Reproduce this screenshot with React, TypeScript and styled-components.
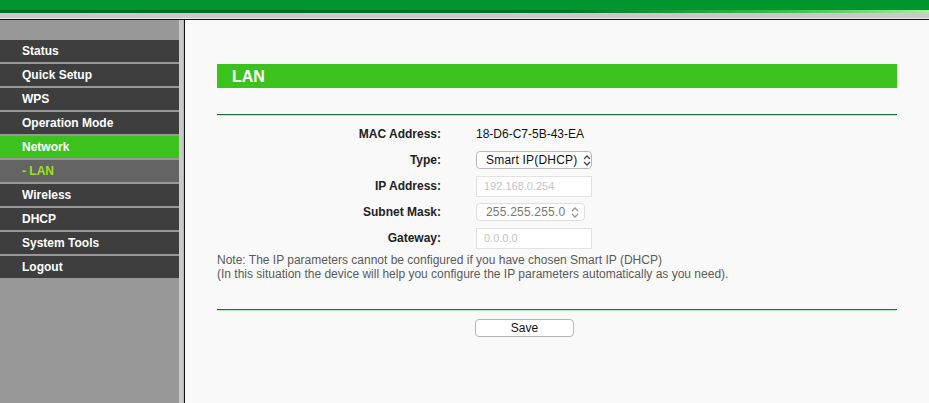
import styled, { createGlobalStyle } from "styled-components";

const GlobalStyle = createGlobalStyle`
  html, body {
    margin: 0;
    padding: 0;
    width: 929px;
    height: 403px;
    overflow: hidden;
    background: #f9f9f9;
    font-family: "Liberation Sans", Arial, Helvetica, sans-serif;
  }
`;

const Page = styled.div`
  display: flex;
  flex-direction: column;
  width: 929px;
  height: 403px;
`;

const TopBar = styled.div`
  display: flex;
  flex-direction: column;
  flex-shrink: 0;
`;

const Stripe = styled.div<{ $h: number; $bg: string }>`
  height: ${({ $h }) => $h}px;
  background: ${({ $bg }) => $bg};
`;

const Body = styled.div`
  display: flex;
  flex: 1;
  min-height: 0;
`;

const Sidebar = styled.nav`
  width: 179px;
  flex-shrink: 0;
  display: flex;
  flex-direction: column;
  gap: 2px;
  padding-top: 20px;
  background: #989898;
`;

const MenuItem = styled.div<{ $state?: "active" | "sub" }>`
  height: 22px;
  line-height: 22px;
  padding-left: 22px;
  font-size: 12px;
  font-weight: bold;
  color: ${({ $state }) => ($state === "sub" ? "#9ee01a" : "#fff")};
  background: ${({ $state }) =>
    $state === "active" ? "#3cc21c" : $state === "sub" ? "#646464" : "#3e3e3e"};
`;

const Divider = styled.div`
  width: 5px;
  flex-shrink: 0;
  background: #c9c9c9;
  border-right: 1px solid #111;
  box-shadow: inset -1px 0 0 #b5b5b5;
`;

const Content = styled.main`
  flex: 1;
  padding: 44px 32px 0 32px;
  background: #f9f9f9;
`;

const Section = styled.div`
  width: 680px;
`;

const TitleBar = styled.div`
  height: 24px;
  line-height: 25px;
  padding-left: 15px;
  background: #3cc21c;
  color: #fff;
  font-size: 16px;
  font-weight: bold;
`;

const Rule = styled.div<{ $mt: number }>`
  margin-top: ${({ $mt }) => $mt}px;
  height: 1px;
  background: #236b3c;
  border-bottom: 1px solid #b6e8c4;
`;

const Form = styled.div`
  display: grid;
  grid-template-columns: 224px auto;
  grid-auto-rows: 26px;
  column-gap: 34px;
  align-items: center;
  margin-top: 5px;
`;

const Label = styled.div`
  text-align: right;
  font-size: 12px;
  font-weight: bold;
  color: #222;
`;

const Value = styled.div`
  font-size: 12px;
  color: #111;
  padding-left: 1px;
`;

const FakeSelect = styled.div<{ $w: number; $disabled?: boolean }>`
  display: flex;
  align-items: center;
  justify-content: space-between;
  gap: 6px;
  box-sizing: border-box;
  width: ${({ $w }) => $w}px;
  height: 18px;
  margin-left: 1px;
  padding: 0 5px 0 9px;
  border: 1px solid ${({ $disabled }) => ($disabled ? "#dedede" : "#b9b9b9")};
  border-radius: 4px;
  background: #fff;
  font-size: 12px;
  letter-spacing: 0.2px;
  white-space: nowrap;
  color: ${({ $disabled }) => ($disabled ? "#777" : "#111")};
  svg {
    flex-shrink: 0;
    opacity: ${({ $disabled }) => ($disabled ? 0.55 : 1)};
  }
`;

const FakeInput = styled.div`
  box-sizing: border-box;
  width: 116px;
  height: 21px;
  line-height: 19px;
  margin-left: 1px;
  padding-left: 7px;
  border: 1px solid #e2e2e2;
  background: #fff;
  font-size: 11px;
  color: #c4c4c4;
`;

const Note = styled.div`
  margin-top: 2px;
  font-size: 12px;
  line-height: 14px;
  color: #5a5a5a;
`;

const ButtonRow = styled.div`
  display: flex;
  padding-left: 258px;
  margin-top: 8px;
`;

const SaveButton = styled.button`
  width: 99px;
  height: 18px;
  padding: 0;
  border: 1px solid #b4b4b4;
  border-radius: 4px;
  background: #fff;
  font-family: "Liberation Sans", Arial, sans-serif;
  font-size: 12px;
  color: #111;
`;

function Chevrons() {
  return (
    <svg width="8" height="11" viewBox="0 0 8 11">
      <path d="M1 4 L4 1 L7 4 M1 7 L4 10 L7 7" fill="none" stroke="#444" strokeWidth="1.3" />
    </svg>
  );
}

const menu = [
  { name: "Status" },
  { name: "Quick Setup" },
  { name: "WPS" },
  { name: "Operation Mode" },
  { name: "Network", state: "active" as const },
  { name: "- LAN", state: "sub" as const },
  { name: "Wireless" },
  { name: "DHCP" },
  { name: "System Tools" },
  { name: "Logout" },
];

export default function App() {
  return (
    <>
      <GlobalStyle />
      <Page>
        <TopBar>
          <Stripe $h={10} $bg="#00962d" />
          <Stripe $h={3} $bg="linear-gradient(to right, #006a27 0%, #00722a 60%, #3fbf4f 85%, #a6eea0 100%)" />
          <Stripe $h={5} $bg="#c9c9c9" />
          <Stripe $h={1} $bg="#e9e9e9" />
          <Stripe $h={1} $bg="#111" />
        </TopBar>
        <Body>
          <Sidebar>
            {menu.map(({ name, state }) => (
              <MenuItem key={name} $state={state}>
                {name}
              </MenuItem>
            ))}
          </Sidebar>
          <Divider />
          <Content>
            <Section>
              <TitleBar>LAN</TitleBar>
              <Rule $mt={26} />
              <Form>
                <Label>MAC Address:</Label>
                <Value>18-D6-C7-5B-43-EA</Value>
                <Label>Type:</Label>
                <FakeSelect $w={116}>
                  Smart IP(DHCP)
                  <Chevrons />
                </FakeSelect>
                <Label>IP Address:</Label>
                <FakeInput>192.168.0.254</FakeInput>
                <Label>Subnet Mask:</Label>
                <FakeSelect $w={109} $disabled>
                  255.255.255.0
                  <Chevrons />
                </FakeSelect>
                <Label>Gateway:</Label>
                <FakeInput>0.0.0.0</FakeInput>
              </Form>
              <Note>
                Note: The IP parameters cannot be configured if you have chosen Smart IP (DHCP)
                <br />
                (In this situation the device will help you configure the IP parameters automatically as you need).
              </Note>
              <Rule $mt={28} />
              <ButtonRow>
                <SaveButton>Save</SaveButton>
              </ButtonRow>
            </Section>
          </Content>
        </Body>
      </Page>
    </>
  );
}
